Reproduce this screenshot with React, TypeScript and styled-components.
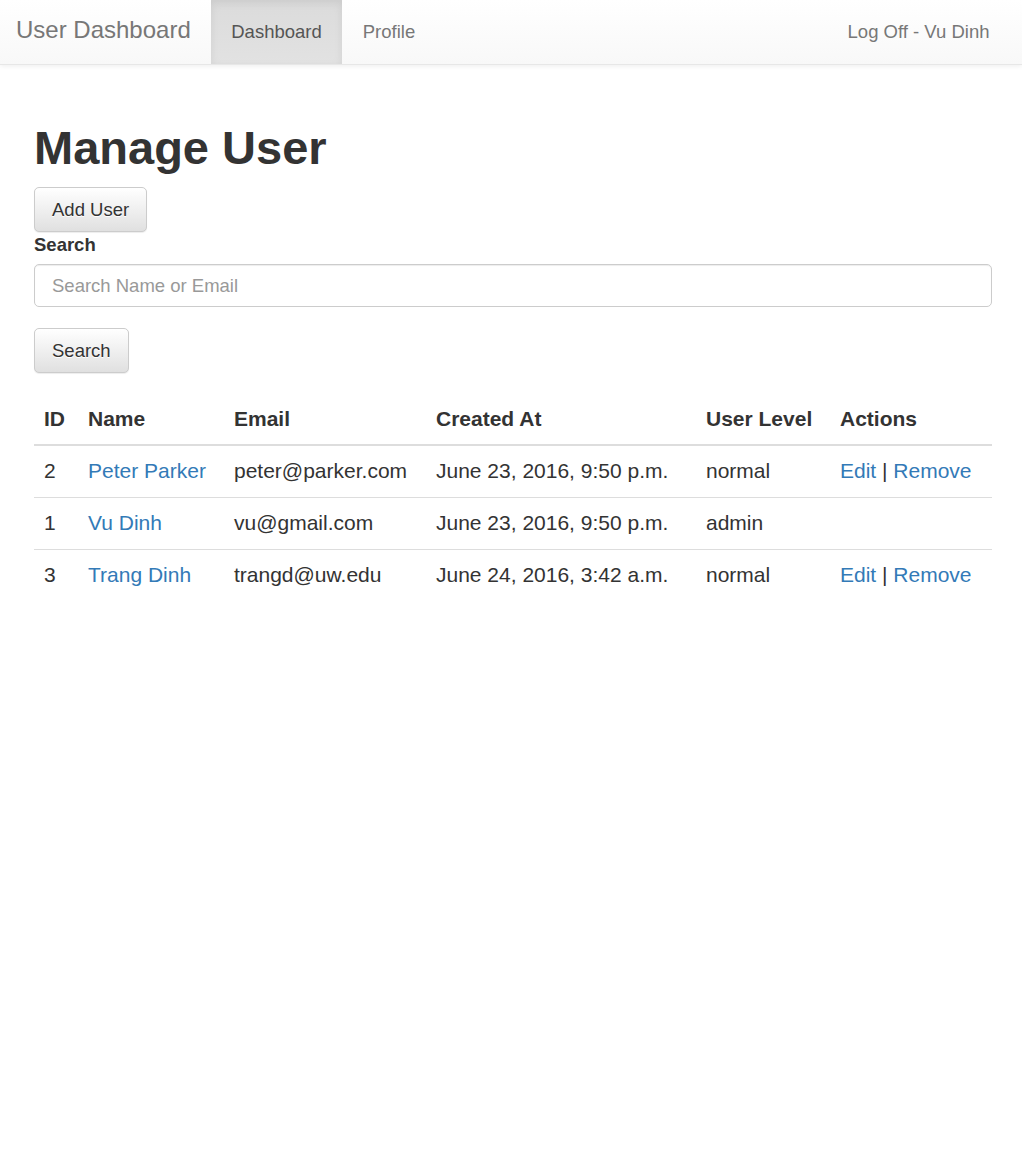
import React from 'react';
import styled, { createGlobalStyle } from 'styled-components';

type User = {
  id: number;
  name: string;
  email: string;
  createdAt: string;
  level: string;
  editable: boolean;
};

const users: User[] = [
  { id: 2, name: 'Peter Parker', email: 'peter@parker.com', createdAt: 'June 23, 2016, 9:50 p.m.', level: 'normal', editable: true },
  { id: 1, name: 'Vu Dinh', email: 'vu@gmail.com', createdAt: 'June 23, 2016, 9:50 p.m.', level: 'admin', editable: false },
  { id: 3, name: 'Trang Dinh', email: 'trangd@uw.edu', createdAt: 'June 24, 2016, 3:42 a.m.', level: 'normal', editable: true },
];

// largura de cada coluna, tirada da tela original
const columns = [
  { label: 'ID', width: 44 },
  { label: 'Name', width: 146 },
  { label: 'Email', width: 202 },
  { label: 'Created At', width: 270 },
  { label: 'User Level', width: 134 },
  { label: 'Actions', width: 162 },
];

const GlobalStyle = createGlobalStyle`
  body {
    margin: 0;
    background: #fff;
    color: #333;
    font-family: "Liberation Sans", Arial, sans-serif;
  }
  * { box-sizing: border-box; }
`;

const Navbar = styled.nav`
  display: flex;
  align-items: stretch;
  height: 65px;
  background-image: linear-gradient(to bottom, #fff 0, #f8f8f8 100%);
  border-bottom: 1px solid #e7e7e7;
  box-shadow: inset 0 1px 0 rgba(255,255,255,.15), 0 1px 5px rgba(0,0,0,.075);
`;

const Brand = styled.a`
  display: flex;
  align-items: center;
  padding: 0 20px 4px 16px;
  font-size: 24px;
  color: #777;
  text-decoration: none;
`;

const NavLink = styled.a<{ $active?: boolean }>`
  display: flex;
  align-items: center;
  padding: 0 20.5px 1px;
  font-size: 18.5px;
  text-decoration: none;
  color: ${p => (p.$active ? '#555' : '#777')};
  background-image: ${p => (p.$active ? 'linear-gradient(to bottom, #dbdbdb 0, #e2e2e2 100%)' : 'none')};
  box-shadow: ${p => (p.$active ? 'inset 0 3px 9px rgba(0,0,0,.075)' : 'none')};
`;

const Spacer = styled.div`
  flex: 1;
`;

const RightNav = styled.div`
  display: flex;
  margin-right: 12px;
`;

const Main = styled.main`
  padding: 0 30px 40px 34px;
`;

const Title = styled.h1`
  margin: 55px 0 11px;
  font-size: 47px;
  line-height: 56px;
  font-weight: bold;
  color: #333;
`;

const Button = styled.button`
  display: block;
  height: 45px;
  padding: 0 17px;
  font-family: inherit;
  font-size: 18.5px;
  color: #333;
  background-image: linear-gradient(to bottom, #fff 0, #e0e0e0 100%);
  border: 1px solid #ccc;
  border-radius: 5px;
  text-shadow: 0 1px 0 #fff;
  box-shadow: inset 0 1px 0 rgba(255,255,255,.15), 0 1px 1px rgba(0,0,0,.075);
  cursor: pointer;
`;

const Label = styled.label`
  display: block;
  margin: 2px 0 8px;
  font-size: 18.5px;
  line-height: 22px;
  font-weight: bold;
`;

const Input = styled.input`
  display: block;
  width: 100%;
  height: 43px;
  padding: 0 17px;
  margin-bottom: 21px;
  font-family: inherit;
  font-size: 18.5px;
  color: #555;
  border: 1px solid #ccc;
  border-radius: 5px;
  box-shadow: inset 0 1px 1px rgba(0,0,0,.075);
  outline: none;
  &::placeholder {
    color: #999;
  }
`;

const Table = styled.table`
  width: 100%;
  margin-top: 21px;
  border-collapse: collapse;
  table-layout: fixed;
  font-size: 21px;
`;

const Col = styled.col<{ $width: number }>`
  width: ${p => p.$width}px;
`;

const Th = styled.th`
  padding: 11px 10px;
  line-height: 28px;
  text-align: left;
  font-weight: bold;
  white-space: nowrap;
  border-bottom: 2px solid #ddd;
`;

const Td = styled.td`
  padding: 10px 10px 12px;
  line-height: 29px;
  white-space: nowrap;
  border-top: 1px solid #ddd;
`;

const Link = styled.a`
  color: #337ab7;
  text-decoration: none;
`;

const App: React.FC = () => {
  return (
    <>
      <GlobalStyle />
      <Navbar>
        <Brand href="#">User Dashboard</Brand>
        <NavLink href="#" $active>Dashboard</NavLink>
        <NavLink href="#">Profile</NavLink>
        <Spacer />
        <RightNav>
          <NavLink href="#">Log Off - Vu Dinh</NavLink>
        </RightNav>
      </Navbar>
      <Main>
        <Title>Manage User</Title>
        <Button>Add User</Button>
        <Label htmlFor="search">Search</Label>
        <Input id="search" placeholder="Search Name or Email" />
        <Button>Search</Button>
        <Table>
          <colgroup>
            {columns.map(c => (
              <Col key={c.label} $width={c.width} />
            ))}
          </colgroup>
          <thead>
            <tr>
              {columns.map(c => (
                <Th key={c.label}>{c.label}</Th>
              ))}
            </tr>
          </thead>
          <tbody>
            {users.map(user => (
              <tr key={user.id}>
                <Td>{user.id}</Td>
                <Td><Link href="#">{user.name}</Link></Td>
                <Td>{user.email}</Td>
                <Td>{user.createdAt}</Td>
                <Td>{user.level}</Td>
                <Td>
                  {user.editable && (
                    <>
                      <Link href="#">Edit</Link> | <Link href="#">Remove</Link>
                    </>
                  )}
                </Td>
              </tr>
            ))}
          </tbody>
        </Table>
      </Main>
    </>
  );
};

export default App;
